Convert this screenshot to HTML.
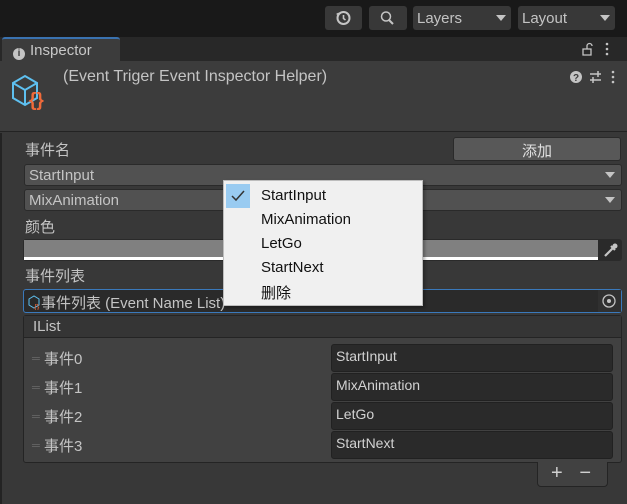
<!DOCTYPE html><html><head><meta charset="utf-8"><style>
*{margin:0;padding:0;box-sizing:border-box}
body{width:627px;height:504px;overflow:hidden;background:#383838;font-family:"Liberation Sans","Noto Sans CJK SC",sans-serif;font-size:14px;color:#c4c4c4;position:relative}
.a{position:absolute}
.btn{background:#383838;border-radius:3px;color:#c4c4c4;}
.dd{background:#515151;border-radius:3px;border:1px solid #2a2a2a;}
.tri{position:absolute;width:0;height:0;border-left:5px solid transparent;border-right:5px solid transparent;border-top:6px solid #c4c4c4}
.fld{background:#2a2a2a;border:1px solid #212121;border-radius:3px;color:#d2d2d2;padding:3px 4px;font-size:14px}
.pi{position:absolute;left:37px;color:#111;font-size:15px}
</style></head><body>
<div class="a" style="left:0;top:0;width:627px;height:37px;background:#191919"></div>
<div class="a btn" style="left:325px;top:6px;width:37px;height:24px"><svg width="37" height="24"><circle cx="18.5" cy="12" r="6" fill="none" stroke="#c4c4c4" stroke-width="2"/><path d="M18.5 9v3.5l2 1.5" stroke="#c4c4c4" stroke-width="1.6" fill="none"/><path d="M11 8l2.5 1.5 0-3z" fill="#c4c4c4"/></svg></div>
<div class="a btn" style="left:369px;top:6px;width:38px;height:24px"><svg width="38" height="24"><circle cx="17" cy="10.5" r="4.5" fill="none" stroke="#c4c4c4" stroke-width="1.5"/><path d="M20 14l4 4" stroke="#c4c4c4" stroke-width="2"/></svg></div>
<div class="a btn" style="left:413px;top:6px;width:98px;height:24px;padding:4px 4px;font-size:15px">Layers<div class="tri" style="left:83px;top:9px"></div></div>
<div class="a btn" style="left:518px;top:6px;width:97px;height:24px;padding:4px 4px;font-size:15px">Layout<div class="tri" style="left:82px;top:9px"></div></div>
<div class="a" style="left:0;top:37px;width:627px;height:24px;background:#282828"></div>
<div class="a" style="left:2px;top:37px;width:118px;height:24px;background:#3c3c3c;border-top:2px solid #3a72b0;border-radius:3px 3px 0 0;font-size:15px;color:#c8c8c8;padding:3px 0 0 11px"><span style="display:inline-block;width:12px;height:12px;border-radius:6px;background:#c4c4c4;color:#3c3c3c;font-size:10px;font-weight:bold;text-align:center;line-height:12px;vertical-align:-1px;margin-right:5px">i</span>Inspector</div>
<svg class="a" style="left:580px;top:41px" width="30" height="16"><path d="M3 8h8v6H3z M7 8V5a2.5 2.5 0 0 1 5 0" fill="none" stroke="#c4c4c4" stroke-width="1.3"/><circle cx="27" cy="3" r="1.3" fill="#c4c4c4"/><circle cx="27" cy="8" r="1.3" fill="#c4c4c4"/><circle cx="27" cy="13" r="1.3" fill="#c4c4c4"/></svg>
<div class="a" style="left:0;top:61px;width:627px;height:71px;background:#3c3c3c;border-bottom:1px solid #232323"></div>
<svg class="a" style="left:10px;top:70px" width="42" height="40"><path d="M3 13l12-7 12 7v15l-12 7-12-7z M3 13l12 7 12-7 M15 20v15" fill="none" stroke="#5ec0f0" stroke-width="2"/><text x="19" y="36" font-family="Liberation Sans" font-weight="bold" font-size="19" fill="#f06a3a">{}</text></svg>
<div class="a" style="left:63px;top:68px;font-size:16px;color:#c4c4c4">(Event Triger Event Inspector Helper)</div>
<svg class="a" style="left:568px;top:69px" width="50" height="18"><circle cx="8" cy="8" r="6" fill="#c4c4c4"/><text x="5" y="12" font-size="10" font-weight="bold" fill="#3c3c3c" font-family="Liberation Sans">?</text><path d="M22 5h11M22 11h11M30 2v6M25 8v6" stroke="#c4c4c4" stroke-width="1.5"/><circle cx="45" cy="3" r="1.3" fill="#c4c4c4"/><circle cx="45" cy="8" r="1.3" fill="#c4c4c4"/><circle cx="45" cy="13" r="1.3" fill="#c4c4c4"/></svg>
<div class="a" style="left:0;top:133px;width:2px;height:371px;background:#232323"></div>
<div class="a" style="left:25px;top:139px;font-size:15px">事件名</div>
<div class="a" style="left:453px;top:137px;width:168px;height:24px;background:#585858;border:1px solid #2a2a2a;border-radius:3px;text-align:center;font-size:15px;color:#e0e0e0;padding-top:2px">添加</div>
<div class="a dd" style="left:24px;top:164px;width:598px;height:22px;padding:2px 4px;font-size:15px">StartInput<div class="tri" style="left:580px;top:7px"></div></div>
<div class="a dd" style="left:24px;top:189px;width:598px;height:22px;padding:2px 4px;font-size:15px">MixAnimation<div class="tri" style="left:580px;top:7px"></div></div>
<div class="a" style="left:25px;top:216px;font-size:15px">颜色</div>
<div class="a" style="left:23px;top:239px;width:599px;height:22px;background:#2a2a2a;border-radius:3px"></div>
<div class="a" style="left:24px;top:240px;width:574px;height:20px;background:#808080;border-bottom:3px solid #fff"></div>
<svg class="a" style="left:600px;top:241px" width="20" height="18"><path d="M5 15l8-8M11 5l4 4" stroke="#c4c4c4" stroke-width="2.2"/><circle cx="15" cy="5" r="2.5" fill="#c4c4c4"/></svg>
<div class="a" style="left:25px;top:265px;font-size:15px">事件列表</div>
<div class="a" style="left:23px;top:289px;width:599px;height:24px;background:#2a2a2a;border:1px solid #3a79bb;border-radius:3px;padding:2px 0 0 4px;font-size:15px"><svg width="13" height="15" style="vertical-align:-2px"><path d="M1 4l5-3 5 3v6l-5 3-5-3z" fill="none" stroke="#5ec0f0" stroke-width="1"/><text x="6" y="15" font-size="8" fill="#f06a3a">{}</text></svg>事件列表 (Event Name List)</div>
<div class="a" style="left:598px;top:290px;width:23px;height:22px;background:#303030"></div>
<svg class="a" style="left:601px;top:292px" width="18" height="18"><circle cx="8" cy="9" r="6" fill="none" stroke="#c4c4c4" stroke-width="1.3"/><circle cx="8" cy="9" r="2" fill="#c4c4c4"/></svg>
<div class="a" style="left:23px;top:315px;width:599px;height:148px;background:#414141;border:1px solid #242424;border-radius:3px"></div>
<div class="a" style="left:24px;top:316px;width:597px;height:22px;background:#353535;border-bottom:1px solid #242424;font-size:15px;padding:2px 0 0 9px">IList</div>
<div class="a" style="left:32px;top:345px;font-size:15px;line-height:29px;color:#c4c4c4"><div><span style="color:#6a6a6a;font-size:11px;vertical-align:2px">═</span> 事件0</div><div><span style="color:#6a6a6a;font-size:11px;vertical-align:2px">═</span> 事件1</div><div><span style="color:#6a6a6a;font-size:11px;vertical-align:2px">═</span> 事件2</div><div><span style="color:#6a6a6a;font-size:11px;vertical-align:2px">═</span> 事件3</div></div>
<div class="a fld" style="left:331px;top:344px;width:282px;height:28px">StartInput</div>
<div class="a fld" style="left:331px;top:373px;width:282px;height:28px">MixAnimation</div>
<div class="a fld" style="left:331px;top:402px;width:282px;height:28px">LetGo</div>
<div class="a fld" style="left:331px;top:431px;width:282px;height:28px">StartNext</div>
<div class="a" style="left:537px;top:462px;width:71px;height:25px;background:#414141;border:1px solid #242424;border-top:none;border-radius:0 0 4px 4px;font-size:20px;color:#d0d0d0;padding:0 0 0 13px">+&nbsp;&nbsp;&nbsp;−</div>
<div class="a" style="left:223px;top:180px;width:200px;height:126px;background:#f0f0f0;border:1px solid #bdbdbd;box-shadow:2px 2px 3px rgba(0,0,0,.3)">
<div class="a" style="left:2px;top:3px;width:24px;height:24px;background:#99cbf1"></div>
<svg class="a" style="left:7px;top:9px" width="14" height="12"><path d="M1 6l4 4 8-9" fill="none" stroke="#333" stroke-width="1.5"/></svg>
<div class="pi" style="top:6px">StartInput</div><div class="pi" style="top:30px">MixAnimation</div><div class="pi" style="top:54px">LetGo</div><div class="pi" style="top:78px">StartNext</div><div class="pi" style="top:101px">删除</div>
</div>
</body></html>
